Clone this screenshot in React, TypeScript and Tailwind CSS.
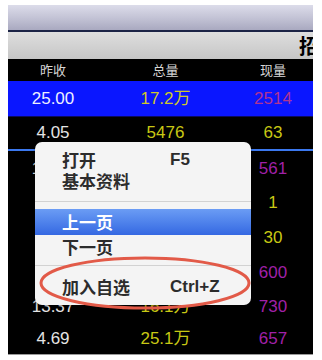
import React from 'react';

type Row = { a: string; b: string; c: string; ac?: string; bc?: string; cc?: string; h: string };

const rows: Row[] = [
  { a: '4.05', b: '5476', c: '63', cc: 'text-[#c8c814]', h: 'h-[32px]' },
  { a: '12.10', b: '3.2万', c: '561', h: 'h-[35px]' },
  { a: '8.77', b: '1024', c: '1', cc: 'text-[#c8c814]', h: 'h-[34px]' },
  { a: '6.32', b: '8830', c: '30', cc: 'text-[#c8c814]', h: 'h-[35px]' },
  { a: '9.15', b: '4.6万', c: '600', h: 'h-[35px]' },
  { a: '13.37', b: '16.1万', c: '730', h: 'h-[34px]' },
  { a: '4.69', b: '25.1万', c: '657', h: 'h-[30px]' },
];

const num = "font-['Liberation_Sans','Noto_Sans_CJK_SC',sans-serif] text-[17px]";
const cols = 'grid grid-cols-[90px_135px_80px] items-center';

const App = () => {
  return (
    <div className="w-[322px] h-[360px] bg-white pt-[5px] pl-[8px]">
      <div className="relative w-[305px] h-[350px] overflow-hidden flex flex-col bg-black border-b border-[#9a9a9a]">
        {/* title bar */}
        <div className="h-[25px] shrink-0 bg-gradient-to-b from-[#dcdcea] via-[#c4c4d6] to-[#a9a9c0]" />
        <div className="h-[2px] shrink-0 bg-[#1c2446]" />
        <div className="h-[27px] shrink-0 bg-gradient-to-b from-[#dedede] to-[#c6c6c6] flex items-center justify-end overflow-hidden">
          <span className="font-['Noto_Sans_CJK_SC',sans-serif] font-bold text-[20px] leading-none text-black mr-[-6px]">招</span>
        </div>

        {/* header */}
        <div className={`${cols} h-[22px] shrink-0 bg-black text-[#d6d6d6] font-['Noto_Sans_CJK_SC',sans-serif] text-[13px] text-center`}>
          <span>昨收</span>
          <span>总量</span>
          <span>现量</span>
        </div>

        {/* selected row */}
        <div className={`${cols} h-[36px] shrink-0 bg-[#0a16ff] border-b border-[#0a0a60] text-center ${num}`}>
          <span className="text-[#eef0ff]">25.00</span>
          <span className="text-[#d0c828]">17.2万</span>
          <span className="text-[#b03492]">2514</span>
        </div>

        {rows.map((r, i) => (
          <React.Fragment key={i}>
            <div className={`${cols} ${r.h} shrink-0 text-center ${num}`}>
              <span className="text-[#e4e4e4]">{r.a}</span>
              <span className="text-[#c8c814]">{r.b}</span>
              <span className={r.cc ?? 'text-[#a021a8]'}>{r.c}</span>
            </div>
            {i === 0 && <div className="h-[2px] shrink-0 bg-[#3b78ee]" />}
          </React.Fragment>
        ))}

        {/* context menu */}
        <div className="absolute left-[27px] top-[137px] w-[216px] h-[163px] bg-[#f4f4f4] rounded-[7px] shadow-[0_1px_3px_rgba(0,0,0,0.4)] pt-[5px] flex flex-col font-['Noto_Sans_CJK_SC',sans-serif] text-[17px] font-semibold text-[#2c2c2c]">
          <div className="h-[22px] grid grid-cols-[108px_1fr] items-center pl-[27px]">
            <span>打开</span>
            <span className="font-['Liberation_Sans',sans-serif] font-bold">F5</span>
          </div>
          <div className="h-[24px] flex items-center pl-[27px]">基本资料</div>
          <div className="h-[16px] flex items-center">
            <div className="h-[1px] w-full bg-[#d2d2d2]" />
          </div>
          <div className="h-[26px] flex items-center pl-[27px] text-white bg-gradient-to-b from-[#6b9cf4] to-[#3568e2]">上一页</div>
          <div className="h-[24px] flex items-center pl-[27px]">下一页</div>
          <div className="h-[12px] flex items-center">
            <div className="h-[1px] w-full bg-[#d2d2d2]" />
          </div>
          <div className="h-[32px] grid grid-cols-[108px_1fr] items-center pl-[27px]">
            <span>加入自选</span>
            <span className="font-['Liberation_Sans',sans-serif] font-bold">Ctrl+Z</span>
          </div>
        </div>

        {/* annotation ellipse */}
        <svg className="absolute left-[30px] top-[250px]" width="214" height="56" viewBox="0 0 214 56">
          <ellipse cx="107" cy="28" rx="104" ry="25" fill="none" stroke="#e25a48" strokeWidth="3" />
        </svg>
      </div>
    </div>
  );
};

export default App;
